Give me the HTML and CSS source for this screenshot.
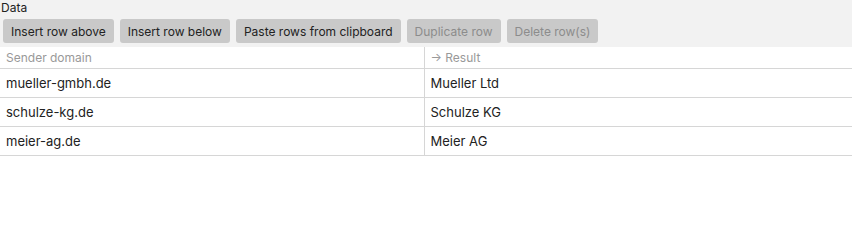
FILE: index.html
```html
<!DOCTYPE html>
<html lang="en">
<head>
  <meta charset="UTF-8" />
  <title>Data</title>
  <link rel="stylesheet" href="styles.css">
</head>
<body>

<!-- Toolbar -->
<div class="data-toolbar">
  <div class="data-toolbar__title">Data</div>
  <div class="data-toolbar__buttons">
    <button type="button">Insert row above</button>
    <button type="button">Insert row below</button>
    <button type="button">Paste rows from clipboard</button>
    <button type="button" disabled>Duplicate row</button>
    <button type="button" disabled>Delete row(s)</button>
  </div>
</div>

<!-- Table -->
<table class="data-table">
  <thead>
    <tr>
      <th class="col-key">Sender domain</th>
      <th>&rarr; Result</th>
    </tr>
  </thead>
  <tbody>
    <tr><td class="col-key">mueller-gmbh.de</td><td>Mueller Ltd</td></tr>
    <tr><td class="col-key">schulze-kg.de</td><td>Schulze KG</td></tr>
    <tr><td class="col-key">meier-ag.de</td><td>Meier AG</td></tr>
  </tbody>
</table>

</body>
</html>
```

FILE: styles.css
```css
* {
  margin: 0;
  padding: 0;
  box-sizing: border-box;
}

body {
  font-family: Inter, "Noto Sans", sans-serif;
  color: #222;
  background: #fff;
}

.data-toolbar {
  background: #f2f2f2;
  padding: 0 3px 4px;
  height: 47px;
}

.data-toolbar__title {
  font-size: 12px;
  line-height: 16px;
  margin-left: -2px;
  color: #222;
}

.data-toolbar__buttons {
  display: flex;
  gap: 6px;
  margin-top: 3px;
}

.data-toolbar__buttons button {
  font-family: inherit;
  font-size: 12px;
  height: 24px;
  padding: 0 8px;
  border: none;
  border-radius: 3px;
  background: #c9c9c9;
  color: #222;
  cursor: pointer;
}

.data-toolbar__buttons button:disabled {
  color: #8c8c8c;
  cursor: default;
}

.data-table {
  width: 100%;
  border-collapse: collapse;
  table-layout: fixed;
}

.data-table th {
  font-weight: normal;
  font-size: 12px;
  color: #999;
  text-align: left;
  height: 21px;
  padding: 0 6px;
  border-bottom: 1px solid #d6d6d6;
}

.data-table td {
  font-size: 13px;
  height: 29px;
  padding: 0 6px;
  border-bottom: 1px solid #d6d6d6;
}

.data-table .col-key {
  width: 424px;
  border-right: 1px solid #d6d6d6;
}
```
